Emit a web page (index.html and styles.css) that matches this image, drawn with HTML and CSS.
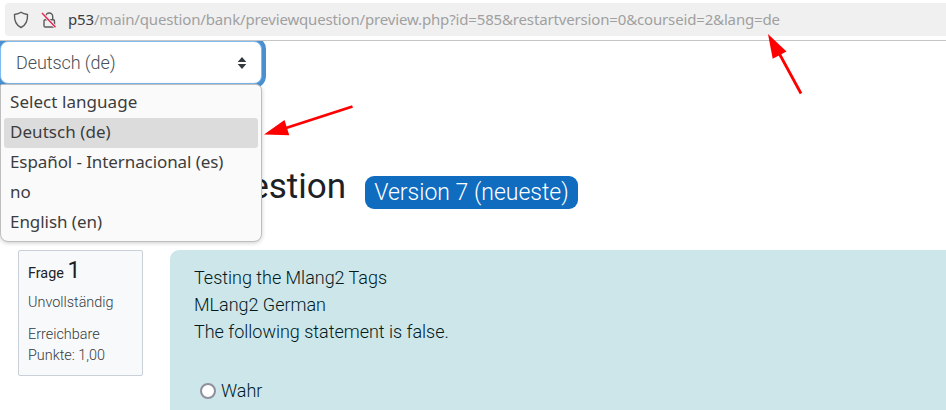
FILE: index.html
```
<!DOCTYPE html>
<html lang="de">
<head>
<meta charset="utf-8">
<title>Question</title>
<link rel="stylesheet" href="styles.css">
</head>
<body>
<header class="toolbar">
  <div class="urlbar">
    <svg class="shield" width="16" height="18" viewBox="0 0 16 18"><path d="M8 1.3C6 2.7 4 3.2 1.5 3.5C1.2 9 2.7 14 8 16.5C13.300 14 14.800 9 14.500 3.500C12 3.200 10 2.700 8 1.300Z" fill="none" stroke="#5b5b5e" stroke-width="1.4" stroke-linejoin="round"/></svg>
    <svg class="lock" width="16" height="18" viewBox="0 0 16 18"><g fill="none" stroke="#5b5b5e" stroke-width="1.4"><rect x="3" y="8.700" width="10.500" height="7.300" rx="1.200"/><path d="M4.700 8.500V5.500a3.500 3.500 0 0 1 7 0V8.500"/></g><path d="M1 2L14.500 16.300" stroke="#f0f0f0" stroke-width="3"/><path d="M1 2L14.500 16.300" stroke="#e8224f" stroke-width="1.400"/></svg>
    <span class="url"><b>p53</b>/main/question/bank/previewquestion/preview.php?id=585&amp;restartversion=0&amp;courseid=2&amp;lang=de</span>
  </div>
</header>
<main class="page">
  <div class="language">
    <div class="select"><span>Deutsch (de)</span><svg width="10" height="12" viewBox="0 0 10 12"><path d="M5 0L9.300 5H.7ZM.7 7H9.300L5 12Z" fill="#343a40"/></svg></div>
    <ul class="menu">
      <li><span class="m1">Select language</span></li>
      <li class="active"><span class="m2">Deutsch (de)</span></li>
      <li><span class="m3">Español - Internacional (es)</span></li>
      <li><span class="m4">no</span></li>
      <li><span class="m5">English (en)</span></li>
    </ul>
  </div>
  <div class="heading"><h2>estion</h2><span class="badge">Version 7 (neueste)</span></div>
  <div class="question">
    <aside class="info">
      <h3>Frage <span>1</span></h3>
      <p class="state">Unvollständig</p>
      <p class="grade">Erreichbare<br>Punkte: 1,00</p>
    </aside>
    <section class="content">
      <p>Testing the Mlang2 Tags</p>
      <p>MLang2 German</p>
      <p>The following statement is false.</p>
      <div class="answer"><i class="radio"></i><span>Wahr</span></div>
    </section>
  </div>
</main>
<svg class="arrows" width="946" height="410" viewBox="0 0 946 410">
  <g fill="#f00" stroke="none"><path d="M264 134.500L284.500 120L289.300 135.200Z"/><path d="M768 34L786.500 51.500L772.700 58.700Z"/></g>
  <path d="M352.500 106.500L286 128M801 93.500L779.500 54" fill="none" stroke="#f00" stroke-width="2.800"/>
</svg>
</body>
</html>
```
FILE: styles.css
```
* { box-sizing: border-box; }
body { margin: 0; height: 410px; overflow: hidden; background: #fff; font-family: Roboto, sans-serif; font-weight: 300; color: #1d2125; position: relative; }
p, h2, h3, ul { margin: 0; padding: 0; }
.toolbar { height: 41px; padding: 3px 0 0 5px; border-bottom: 1px solid #c5c5c5; }
.urlbar { height: 33px; background: #f0f0f0; border-radius: 4px 0 0 4px; display: flex; align-items: center; padding-left: 8px; }
.lock { margin-left: 12px; }
.url { margin: -1px 0 0 11px; font: 400 15px/20px "Noto Sans", sans-serif; color: #a0a0a1; white-space: nowrap; letter-spacing: -0.155px; }
.url b { font-weight: 400; color: #3c3c3e; }
.page { height: 369px; overflow: hidden; }
.language { position: relative; z-index: 1; height: 43px; width: 264px; }
.select { height: 43px; width: 262px; border: 1px solid #7dbbf0; border-radius: 8px; box-shadow: 0 0 0 4px #4a90d0; display: flex; align-items: center; justify-content: space-between; padding: 0 14px 0 15px; background: #fff; color: #495057; font-size: 18px; letter-spacing: -0.08px; }
.menu { position: absolute; top: 43px; left: 0; width: 262px; height: 158px; padding: 3px; list-style: none; background: #fafafa; border: 1px solid #bebebe; border-radius: 2px 6px 8px 8px; box-shadow: 0 1px 4px #0003; font: 400 17px/28px "Noto Sans", sans-serif; color: #3d3d3d; }
.menu li { height: 30px; padding-left: 6px; border-radius: 3px; white-space: nowrap; }
.menu .active { background: #dcdcdc; }
.m1, .m2 { letter-spacing: 0.05px; }
.m3 { letter-spacing: -0.09px; }
.m5 { letter-spacing: -0.05px; }
.heading { height: 166px; padding-top: 78px; width: 578px; display: flex; justify-content: flex-end; align-items: flex-start; }
h2 { font-size: 35px; line-height: 50px; font-weight: 400; white-space: nowrap; margin-right: 19px; }
.badge { margin-top: 14px; width: 213px; height: 33px; border-radius: 9px; background: #0f6cbf; color: #fff; font-size: 23px; line-height: 33px; text-align: center; white-space: nowrap; }
.question { display: flex; gap: 27px; padding-left: 18px; align-items: flex-start; }
.info { width: 125px; height: 126px; border: 1px solid #cad0d7; border-radius: 2px; background: #f8f9fa; padding: 5px 9px; font-size: 14.400px; line-height: 21px; color: #343a40; }
h3 { font-size: 14.400px; font-weight: 400; line-height: 32px; color: #1d2125; }
h3 span { font-size: 23px; font-weight: 400; line-height: 30px; }
.state { margin-top: 2px; }
.grade { margin-top: 11px; }
.content { flex: 1; height: 160px; background: #cde6ea; border-radius: 9px 0 0 0; padding: 14px 24px; font-size: 18px; line-height: 27px; color: #001a1e; letter-spacing: -0.02px; }
.answer { display: flex; align-items: center; gap: 5px; margin: 32px 0 0 6px; }
.radio { width: 16px; height: 16px; border: 2px solid #8f8f9d; border-radius: 50%; background: #fff; }
.arrows { position: absolute; left: 0; top: 0; z-index: 2; }
```
